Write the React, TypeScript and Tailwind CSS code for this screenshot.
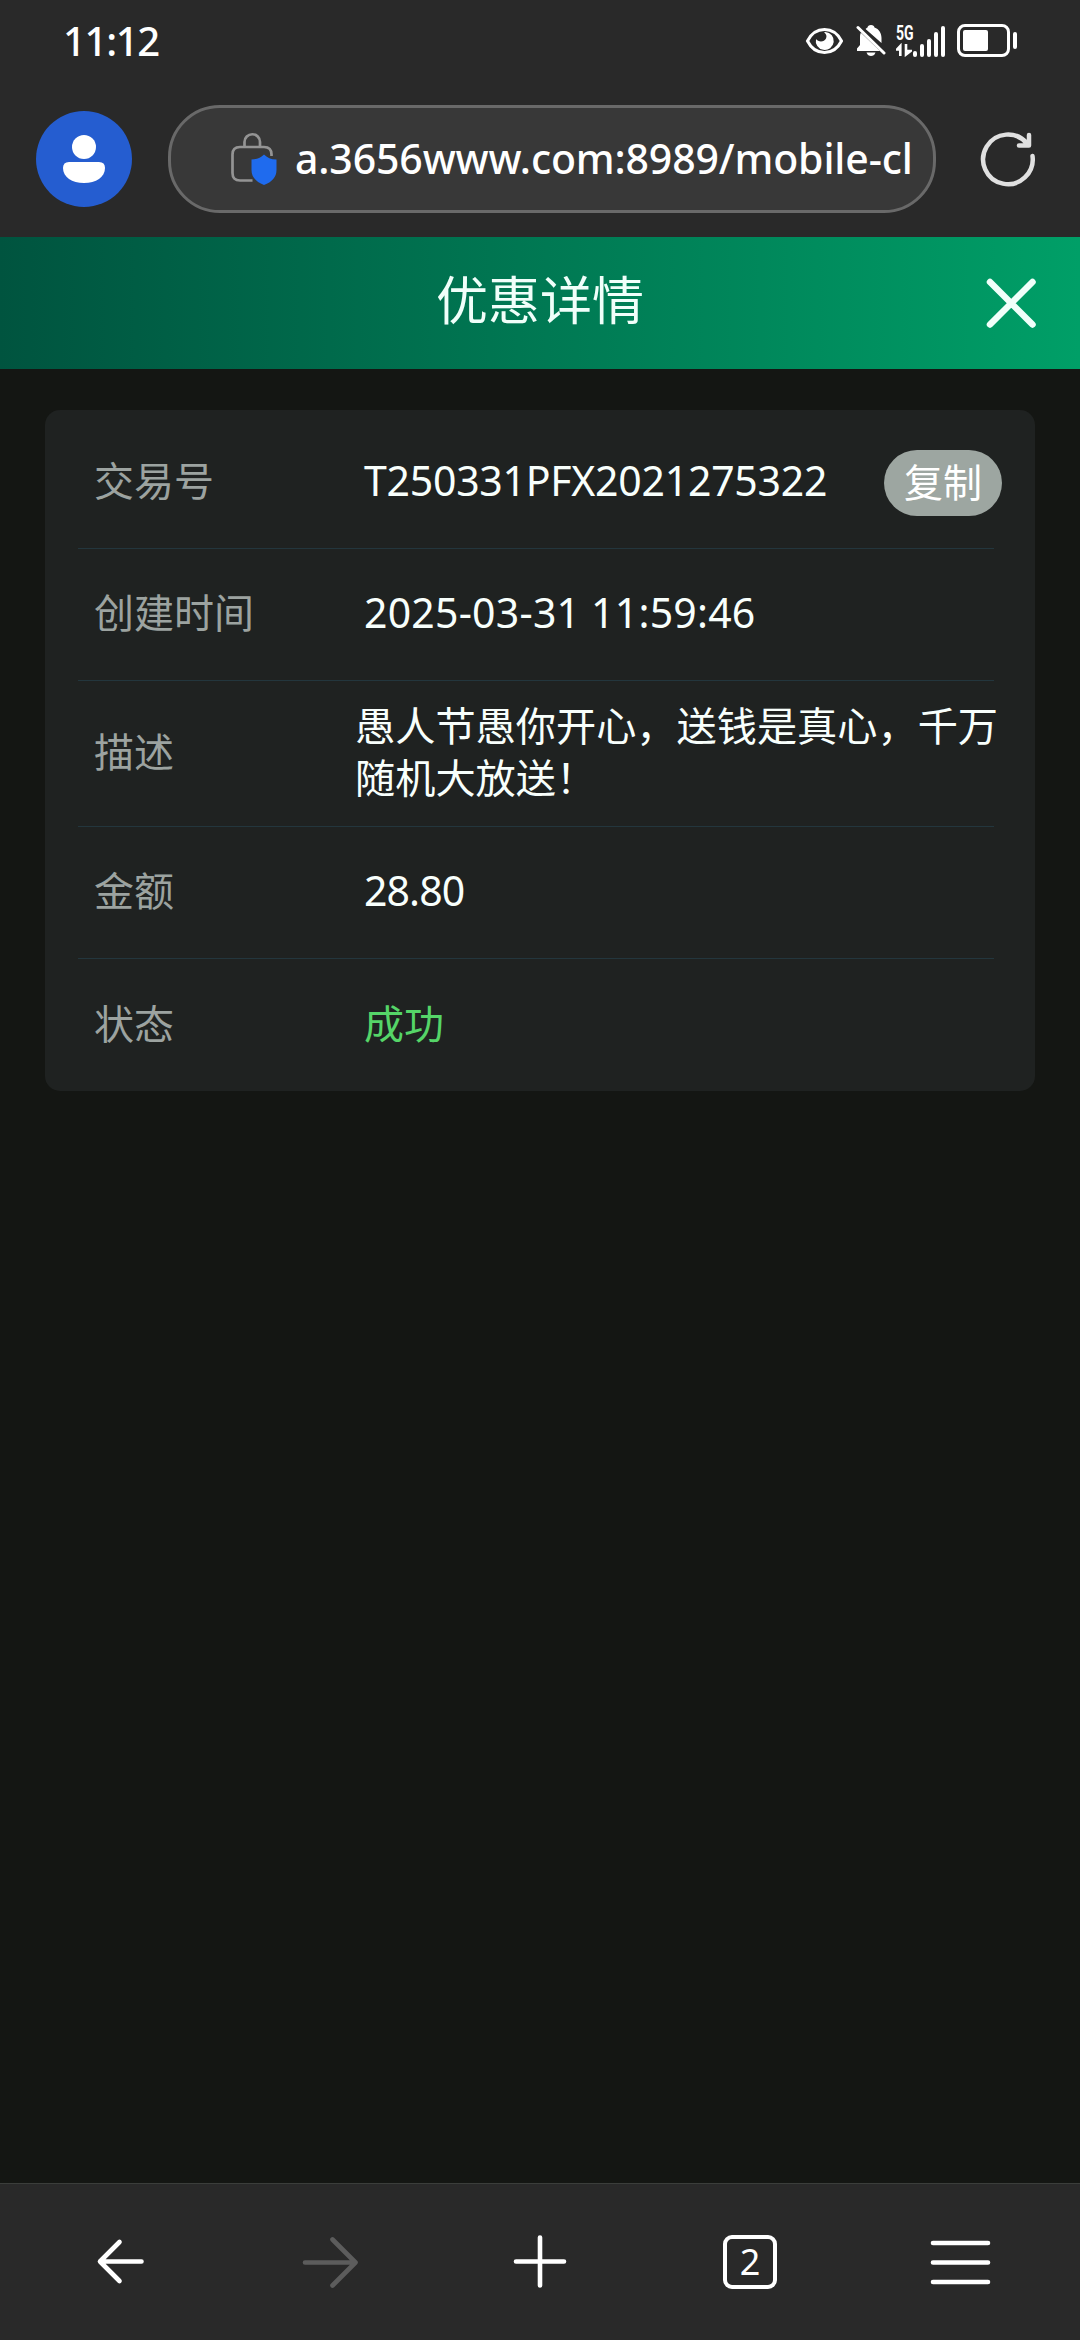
import type { ReactNode } from "react";
import clsx from "clsx";

interface DetailRow {
    label: string;
    value: string;
    height: string;
    valueClass?: string;
    copyable?: boolean;
}

const ROWS: DetailRow[] = [
    {
        label: "交易号",
        value: "T250331PFX2021275322",
        height: "h-[139px] pt-1",
        valueClass: "pl-[9px] text-[41px] tracking-[-0.25px]",
        copyable: true,
    },
    {
        label: "创建时间",
        value: "2025-03-31 11:59:46",
        height: "h-[132px] pb-[3px]",
        valueClass: "pl-[9px] text-[41px] tracking-[0.22px]",
    },
    {
        label: "描述",
        value: "愚人节愚你开心，送钱是真心，千万随机大放送！",
        height: "h-[146px] pb-1",
        valueClass: "w-[648px] shrink-0 text-[40.2px] leading-[52px]",
    },
    {
        label: "金额",
        value: "28.80",
        height: "h-[132px] pb-1",
        valueClass: "pl-[9px] text-[41px] tracking-[-0.9px]",
    },
    {
        label: "状态",
        value: "成功",
        height: "h-[132px] pb-[3px]",
        valueClass: "pl-[9px] text-[40px] !text-[#55d568]",
    },
];

function StatusBar() {
    return (
        <div className="flex h-[81px] items-center justify-between pr-[63px] pl-[63px] text-white">
            <span className="text-[40px] font-medium leading-none tracking-[-1.3px]">11:12</span>
            <div className="flex items-center">
                <svg width="39" height="28" viewBox="0 0 38 28" className="mr-[12px]">
                    <path
                        d="M2 14C6 6 12 2.5 19 2.5S32 6 36 14C32 22 26 25.500 19 25.500S6 22 2 14Z"
                        fill="none"
                        stroke="currentColor"
                        strokeWidth="3"
                    />
                    <path
                        d="M20 5A9 9 0 1 1 10.500 12C12.500 15 18.500 15.500 20.500 11.500C21.500 9 21 7 18.500 5.200Z"
                        fill="currentColor"
                    />
                </svg>
                <svg width="30" height="33" viewBox="0 0 30 33" className="mr-[10px]">
                    <path
                        d="M15 1C17.200 1 18.200 2 18.500 3.500C23 5 25.500 9 25.500 14V19L9.500 5C10.500 4.200 11 3.800 11.500 3.500C11.800 2 12.800 1 15 1Z"
                        fill="currentColor"
                    />
                    <path
                        d="M5 8.500L26 27H1V24.500L4 21V13C4 11 4.300 9.800 5 8.500Z"
                        fill="currentColor"
                    />
                    <path d="M10.500 28.500H19.500C18.500 31.200 17 32 15 32S11.500 31.200 10.500 28.500Z" fill="currentColor" />
                    <path d="M3 3L29 28" stroke="#292929" strokeWidth="5.500" />
                    <path d="M2 3.500L28 29" stroke="currentColor" strokeWidth="3" strokeLinecap="round" />
                </svg>
                <div className="mr-[12px] flex items-end">
                    <div className="flex w-[17px] flex-col">
                        <span className="origin-left scale-x-[0.7] font-[Roboto] text-[20px] leading-[16px] font-bold">
                            5G
                        </span>
                        <svg width="16" height="14" viewBox="0 0 16 14" className="mt-[2px]">
                            <path d="M4.300 13V3L1 6.500H4.300" fill="currentColor" stroke="currentColor" strokeWidth="2.600" />
                            <path d="M10 1V11.500L14.500 8H10" fill="currentColor" stroke="currentColor" strokeWidth="2.600" />
                        </svg>
                    </div>
                    <div className="flex items-end gap-[3px]">
                        <i className="h-[6px] w-[4px] rounded-full bg-white" />
                        <i className="h-[13px] w-[4px] rounded-full bg-white" />
                        <i className="h-[18px] w-[4px] rounded-full bg-white" />
                        <i className="h-[25px] w-[4px] rounded-full bg-white" />
                        <i className="h-[31px] w-[4px] rounded-full bg-white" />
                    </div>
                </div>
                <div className="flex items-center gap-[3px]">
                    <div className="h-[33px] w-[53px] rounded-[8px] border-[3px] border-white p-[3px]">
                        <div className="h-full w-[25px] rounded-[2px] bg-white" />
                    </div>
                    <i className="h-[17px] w-[4px] rounded-full bg-white" />
                </div>
            </div>
        </div>
    );
}

function AddressBar() {
    return (
        <div className="flex h-[156px] items-start px-9 pt-[24px]">
            <div className="mt-[6px] flex size-24 items-center justify-center rounded-full bg-[#255dd0]">
                <svg width="42" height="48" viewBox="0 0 42 48" fill="white">
                    <circle cx="21" cy="12" r="12" />
                    <path d="M6 27H36Q42 27 42 33C42 42 33 48 21 48S0 42 0 33Q0 27 6 27Z" />
                </svg>
            </div>
            <div className="ml-9 flex h-[108px] w-[768px] items-center overflow-hidden rounded-[52px] border-[3px] border-[#696969] bg-[#383838] pl-[60px]">
                <svg width="46" height="54" viewBox="0 0 46 54" className="shrink-0">
                    <path
                        d="M13.500 14.500V10A7.700 7.700 0 0 1 29 10V14.500M21.500 48.500H9Q1.500 48.500 1.500 41V22.500Q1.500 15 9 15H33Q40.500 15 40.500 22.500V24"
                        fill="none"
                        stroke="#949494"
                        strokeWidth="2.700"
                    />
                    <path
                        d="M33 22.500C36 25.500 40 27.500 45.500 27.500V38C45.500 45 41 50 33 53C25 50 20.500 45 20.500 38V27.500C26 27.500 30 25.500 33 22.500Z"
                        fill="#1f6bee"
                    />
                </svg>
                <span className="ml-[18px] text-[41px] font-medium tracking-[-0.13px] whitespace-nowrap text-white">
                    a.3656www.com:8989/mobile-cl
                </span>
            </div>
            <svg width="60" height="60" viewBox="0 0 60 60" className="mt-6 ml-[42px] shrink-0">
                <path
                    d="M54.500 27A24.800 24.800 0 1 1 49 14.500M51 6V16.500H41"
                    fill="none"
                    stroke="#e0e0e0"
                    strokeWidth="4.500"
                    strokeLinecap="round"
                    strokeLinejoin="round"
                />
            </svg>
        </div>
    );
}

function PageHeader() {
    return (
        <header className="grid h-[132px] grid-cols-[1fr_auto_1fr] items-center bg-linear-to-r from-[#00543f] to-[#009f67] text-[#f0fffa]">
            <span />
            <h1 className="pb-[6px] text-[52px] leading-none">优惠详情</h1>
            <svg width="52" height="52" viewBox="0 0 52 52" className="mr-[43px] justify-self-end">
                <path
                    d="M5 5L47.500 47.500M47.500 5L5 47.500"
                    stroke="currentColor"
                    strokeWidth="6.500"
                    strokeLinecap="round"
                />
            </svg>
        </header>
    );
}

function DetailCard() {
    return (
        <section className="mx-[45px] mt-[41px] h-[681px] rounded-[15px] bg-[#1f2221] pr-[41px] pl-[33px]">
            {ROWS.map((row, i) => (
                <div
                    key={row.label}
                    className={clsx(
                        "flex items-center pl-4",
                        row.height,
                        i < ROWS.length - 1 && "border-b border-[#23363d]",
                    )}
                >
                    <div className="w-[261px] shrink-0 text-[40px] leading-none text-[#9ca3a0]">
                        {row.label}
                    </div>
                    <div className={clsx("text-[#f8fffc]", row.valueClass)}>{row.value}</div>
                    {row.copyable && (
                        <button className="mt-1 -mr-2 ml-auto flex h-[66px] w-[118px] shrink-0 items-center justify-center rounded-full bg-[#9da6a1] pb-[3px] text-[39px] leading-none text-white">
                            复制
                        </button>
                    )}
                </div>
            ))}
        </section>
    );
}

function NavIcon({ path, color = "white" }: { path: string; color?: string }) {
    return (
        <svg
            width="64"
            height="64"
            viewBox="0 0 64 64"
            fill="none"
            stroke={color}
            strokeWidth="4.600"
            strokeLinecap="round"
            strokeLinejoin="round"
        >
            <path d={path} />
        </svg>
    );
}

function NavItem({ children }: { children: ReactNode }) {
    return <div className="flex w-[210px] items-center justify-center">{children}</div>;
}

function BottomNav() {
    return (
        <nav className="flex h-[157px] justify-center border-t border-[#3b3e3b] bg-[#292929] text-white">
            <NavItem>
                <NavIcon path="M53.500 31.500H12M31.500 12L12 31.500L31.500 51" />
            </NavItem>
            <NavItem>
                <NavIcon path="M7 32.500H57M34.500 9.500L57.500 32.500L34.500 55.500" color="#5c5c5c" />
            </NavItem>
            <NavItem>
                <NavIcon path="M32 7.500V55.500M8 31.500H56" />
            </NavItem>
            <NavItem>
                <div className="flex h-[54px] w-[54px] items-center justify-center rounded-[9px] border-[4.500px] border-white text-[36px] leading-none">
                    2
                </div>
            </NavItem>
            <NavItem>
                <NavIcon path="M5 13H60M5 32.500H60M5 52H60" />
            </NavItem>
        </nav>
    );
}

export default function App() {
    return (
        <div className="flex h-[2340px] w-[1080px] flex-col overflow-hidden bg-[#141613] font-['Noto_Sans','Noto_Sans_CJK_SC',sans-serif]">
            <div className="bg-[#292929]">
                <StatusBar />
                <AddressBar />
            </div>
            <PageHeader />
            <main className="flex-1">
                <DetailCard />
            </main>
            <BottomNav />
        </div>
    );
}
